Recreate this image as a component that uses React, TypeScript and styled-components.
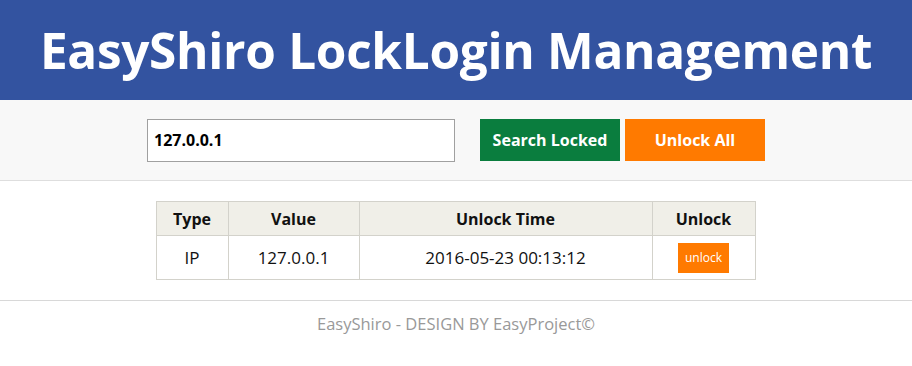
import styled, { createGlobalStyle } from 'styled-components';

const GlobalStyle = createGlobalStyle`
  body {
    margin: 0;
    font-family: "Open Sans", "Noto Sans", sans-serif;
    background: #fff;
  }
`;

const Header = styled.header`
  height: 100px;
  background-color: #3353a0;
  display: flex;
  align-items: center;
  justify-content: center;
`;

const Title = styled.h1`
  margin: 0;
  color: #fff;
  font-size: 49.5px;
  font-weight: 700;
  letter-spacing: -0.3px;
`;

const SearchBar = styled.section`
  height: 80px;
  background-color: #f8f8f8;
  border-bottom: 1px solid #dedede;
  display: flex;
  align-items: center;
  justify-content: center;
  padding-left: 5px;
`;

const Input = styled.input`
  box-sizing: border-box;
  width: 308px;
  height: 43px;
  border: 1px solid #a0a0a0;
  padding: 0 6px;
  font-family: inherit;
  font-size: 16px;
  font-weight: 700;
  color: #000;
  margin-right: 25px;
`;

const Button = styled.button<{ $color: string }>`
  width: 140px;
  height: 42px;
  border: none;
  margin-right: 5px;
  background-color: ${(p) => p.$color};
  color: #fff;
  font-family: inherit;
  font-size: 16px;
  font-weight: 700;
  cursor: pointer;
`;

const Content = styled.main`
  display: flex;
  justify-content: center;
  padding: 20px 0 20px;
  border-bottom: 1px solid #d8d8d8;
`;

const Table = styled.table`
  width: 600px;
  table-layout: fixed;
  border-collapse: collapse;
  margin-right: 1px;
  font-size: 17px;
  color: #111;
`;

const Th = styled.th<{ $w?: number }>`
  height: 33px;
  padding: 0;
  background-color: #f0efe8;
  border: 1px solid #d3d2cb;
  font-size: 16px;
  font-weight: 700;
  width: ${(p) => (p.$w ? `${p.$w}px` : 'auto')};
`;

const Td = styled.td`
  height: 43px;
  padding: 0;
  border: 1px solid #d3d2cb;
  text-align: center;
`;

const SmallButton = styled.button`
  background-color: #ff7a00;
  color: #fff;
  border: none;
  height: 30px;
  padding: 0 7px;
  font-family: inherit;
  font-size: 12px;
  cursor: pointer;
  vertical-align: middle;
`;

const Footer = styled.footer`
  text-align: center;
  color: #999;
  font-size: 16.5px;
  padding-top: 11px;
`;

export default function App() {
  return (
    <>
      <GlobalStyle />
      <Header>
        <Title>EasyShiro LockLogin Management</Title>
      </Header>

      <SearchBar>
        <Input defaultValue="127.0.0.1" />
        <Button $color="#0a7d3e">Search Locked</Button>
        <Button $color="#ff7a00">Unlock All</Button>
      </SearchBar>

      <Content>
        <Table>
          <thead>
            <tr>
              <Th $w={71}>Type</Th>
              <Th $w={130}>Value</Th>
              <Th>Unlock Time</Th>
              <Th $w={102}>Unlock</Th>
            </tr>
          </thead>
          <tbody>
            <tr>
              <Td>IP</Td>
              <Td>127.0.0.1</Td>
              <Td>2016-05-23 00:13:12</Td>
              <Td>
                <SmallButton>unlock</SmallButton>
              </Td>
            </tr>
          </tbody>
        </Table>
      </Content>

      <Footer>EasyShiro - DESIGN BY EasyProject©</Footer>
    </>
  );
}
